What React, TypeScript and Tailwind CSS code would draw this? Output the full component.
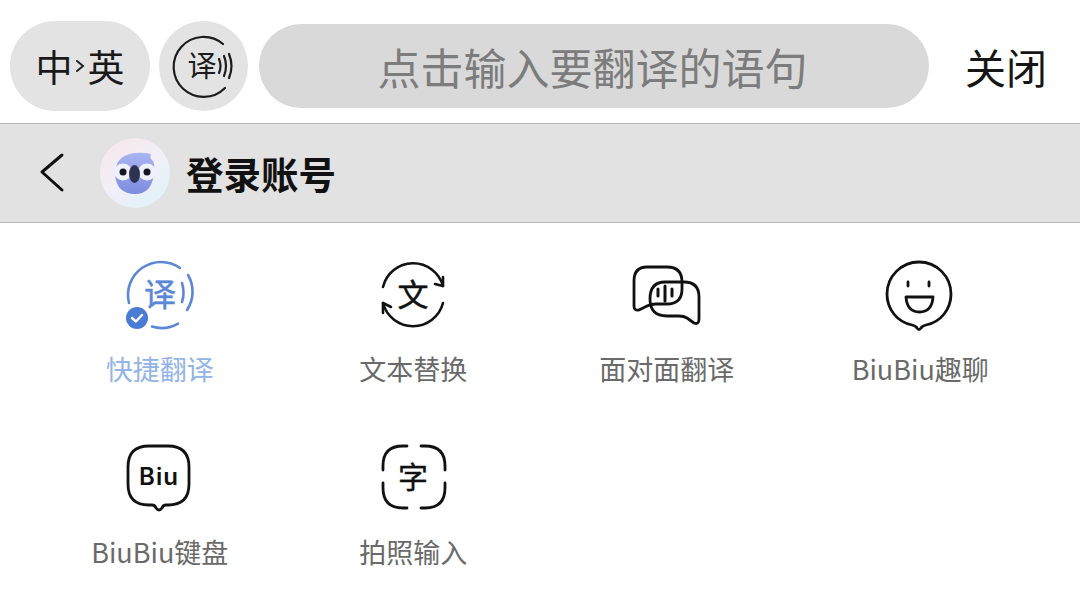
const CJK = "font-['Noto_Sans_CJK_SC','Noto_Sans',sans-serif]";

function TranslateVoiceIcon() {
  return (
    <svg width="62" height="62" viewBox="0 0 62 62" fill="none" stroke="#1c1c1c" strokeWidth="2.2" strokeLinecap="round" className="overflow-visible">
      <path d="M50 9A30 30 0 1 0 52 53" />
      <path d="M46 24Q49 31 46 38" />
      <path d="M51 21Q55 31 51 41" />
      <path d="M56 19Q61 31 56 43" />
      <text x="29" y="42" textAnchor="middle" fontSize="29" fontFamily="Noto Sans CJK SC" fill="#1c1c1c" stroke="none">译</text>
    </svg>
  );
}

function KoalaAvatar() {
  return (
    <svg width="72" height="72" viewBox="0 0 72 72" className="blur-[0.5px]">
      <defs>
        <linearGradient id="halo" x1="0.2" y1="0" x2="0.8" y2="1">
          <stop offset="0" stopColor="#f5e8ec" />
          <stop offset="0.5" stopColor="#f2eff8" />
          <stop offset="1" stopColor="#dff2fa" />
        </linearGradient>
        <linearGradient id="head" x1="0.5" y1="0" x2="0.5" y2="1">
          <stop offset="0" stopColor="#a9b4f0" />
          <stop offset="1" stopColor="#7c8ce0" />
        </linearGradient>
      </defs>
      <circle cx="36" cy="36" r="35" fill="url(#halo)" />
      <path d="M17 30Q20 18 35 16Q46 15 52 17Q50 21 54 24Q56 28 55 36Q53 57 36 57Q18 57 16 38Q16 33 17 30Z" fill="url(#head)" />
      <ellipse cx="24" cy="35" rx="9" ry="8.5" fill="#eef0fb" />
      <ellipse cx="48" cy="35" rx="9" ry="8.5" fill="#eef0fb" />
      <circle cx="24" cy="35" r="3.5" fill="#15171f" />
      <circle cx="48" cy="35" r="3.5" fill="#15171f" />
      <ellipse cx="35.5" cy="37" rx="5.5" ry="9" fill="#2d3350" />
    </svg>
  );
}

function QuickIcon() {
  return (
    <svg width="76" height="76" viewBox="0 0 76 76" fill="none" stroke="#5b87d6" strokeWidth="2.6" strokeLinecap="round">
      <path d="M7 46A33 33 0 0 1 58 11" />
      <path d="M66 18A33 33 0 0 1 65 53" />
      <path d="M30 69.600A33 33 0 0 0 56 66.600" />
      <path d="M60 26Q63 36 60 45" />
      <text x="38" y="49" textAnchor="middle" fontSize="32" fontFamily="Noto Sans CJK SC" fill="#5b87d6" stroke="#5b87d6" strokeWidth="0.5">译</text>
      <circle cx="15" cy="61" r="11" fill="#4a7cd6" stroke="none" />
      <path d="M10 61L14 64.500L20 58" stroke="#fff" strokeWidth="2.400" strokeLinejoin="round" />
    </svg>
  );
}

function SwapIcon() {
  return (
    <svg width="76" height="76" viewBox="0 0 76 76" fill="none" stroke="#111" strokeWidth="2.6" strokeLinecap="round" strokeLinejoin="round">
      <path d="M8 30A31 31 0 0 1 68 29" />
      <path d="M68 20L68 29L60 27" />
      <path d="M68 46A31 31 0 0 1 8 46" />
      <path d="M8 56L8 46L16 50" />
      <text x="38" y="49" textAnchor="middle" fontSize="31" fontFamily="Noto Sans CJK SC" fill="#111" stroke="#111" strokeWidth="0.5">文</text>
    </svg>
  );
}

function FaceToFaceIcon() {
  return (
    <svg width="76" height="76" viewBox="0 0 76 76" fill="none" stroke="#111" strokeWidth="2.800" strokeLinecap="round" strokeLinejoin="round">
      <path d="M18 10H38Q53 10 53 25V32Q53 47 38 47H27Q22 47 18 49L10 53Q5 54 5 49V24Q5 10 18 10Z" />
      <path d="M36 25H55Q70 25 70 40V62Q70 68 65 66L58 61Q55 59 50 59H38Q21 59 21 42Q21 25 36 25Z" />
      <path d="M29 32V39M36 29V44M43 32V39" strokeWidth="3" />
    </svg>
  );
}

function SmileIcon() {
  return (
    <svg width="76" height="76" viewBox="0 0 76 76" fill="none" stroke="#111" strokeWidth="2.800" strokeLinecap="round" strokeLinejoin="round">
      <path d="M30 68C15 65 5 52 5 37A32 32 0 0 1 69 37C69 52 59 65 44 68Q40 69 39 71Q37 74 35 71Q34 69 30 68Z" />
      <path d="M26 25V29M47 25V29" />
      <path d="M24 40H51Q50 55 37.500 55Q25 55 24 40Z" />
    </svg>
  );
}

function BiuIcon() {
  return (
    <svg width="76" height="76" viewBox="0 0 76 76" fill="none" stroke="#111" strokeWidth="2.800" strokeLinecap="round" strokeLinejoin="round">
      <path d="M27 6H46Q67 6 67 27V44Q67 65 46 65H44Q41 65 40 68Q37 72 34 68Q33 65 30 65H27Q6 65 6 44V27Q6 6 27 6Z" />
      <text x="37" y="45" textAnchor="middle" fontSize="24" fontWeight="600" letterSpacing="1" fontFamily="Inter" fill="#111" stroke="none">Biu</text>
    </svg>
  );
}

function ScanIcon() {
  return (
    <svg width="76" height="76" viewBox="0 0 76 76" fill="none" stroke="#111" strokeWidth="2.800" strokeLinecap="round">
      <path d="M8 30V26Q8 6 28 6H32" />
      <path d="M46 6H50Q70 6 70 26V30" />
      <path d="M8 43V48Q8 68 28 68H32" />
      <path d="M46 68H50Q70 68 70 48V43" />
      <text x="38" y="48" textAnchor="middle" fontSize="30" fontFamily="Noto Sans CJK SC" fill="#111" stroke="#111" strokeWidth="0.4">字</text>
    </svg>
  );
}

const ITEMS = [
  { label: "快捷翻译", icon: QuickIcon, active: true },
  { label: "文本替换", icon: SwapIcon },
  { label: "面对面翻译", icon: FaceToFaceIcon },
  { label: "BiuBiu趣聊", icon: SmileIcon },
  { label: "BiuBiu键盘", icon: BiuIcon },
  { label: "拍照输入", icon: ScanIcon },
];

export default function App() {
  return (
    <div className={`w-[1080px] h-[594px] overflow-hidden bg-white ${CJK}`}>
      {/* Search bar */}
      <div className="h-[123px] flex items-center pl-[10px] pt-[9px]">
        <div className="w-[140px] h-[90px] rounded-[45px] bg-[#e3e3e3] flex items-center justify-center text-[37px] leading-none text-[#1a1a1a]">
          中
          <svg width="15" height="20" viewBox="0 0 15 20" fill="none" stroke="#222" strokeWidth="2" strokeLinecap="round">
            <path d="M4 5L10 10L4 15" />
          </svg>
          英
        </div>
        <div className="ml-[9px] w-[89px] h-[90px] rounded-full bg-[#e3e3e3] flex items-center justify-center">
          <TranslateVoiceIcon />
        </div>
        <div className="ml-[11px] w-[670px] h-[84px] pr-[3px] rounded-[42px] bg-[#d9d9d9] flex items-center justify-center text-[43px] leading-none text-[#7c7c7c]">
          点击输入要翻译的语句
        </div>
        <div className="ml-[36px] text-[41px] leading-none text-[#161616]">关闭</div>
      </div>

      {/* Login row */}
      <div className="h-[100px] bg-[#e2e2e2] border-y border-[#b9b9b9] flex items-center pl-[38px]">
        <svg width="30" height="42" viewBox="0 0 30 42" fill="none" stroke="#111" strokeWidth="3" strokeLinecap="round" strokeLinejoin="round">
          <path d="M24 3L4 20L24 38" />
        </svg>
        <div className="ml-[31px]">
          <KoalaAvatar />
        </div>
        <div className="ml-[15px] text-[37.5px] leading-none font-bold text-[#111]">登录账号</div>
      </div>

      {/* Feature grid */}
      <div className="grid grid-cols-4 w-[1014px] ml-[33px] pt-[34px] gap-y-[24px]">
        {ITEMS.map(({ label, icon: Icon, active }) => (
          <div key={label} className="flex flex-col items-center h-[159px]">
            <Icon />
            <div className={`mt-[16px] text-[27px] leading-[40px] whitespace-nowrap ${active ? "text-[#92b4e6]" : "text-[#6a6a6a]"}`}>
              {label}
            </div>
          </div>
        ))}
      </div>
    </div>
  );
}
